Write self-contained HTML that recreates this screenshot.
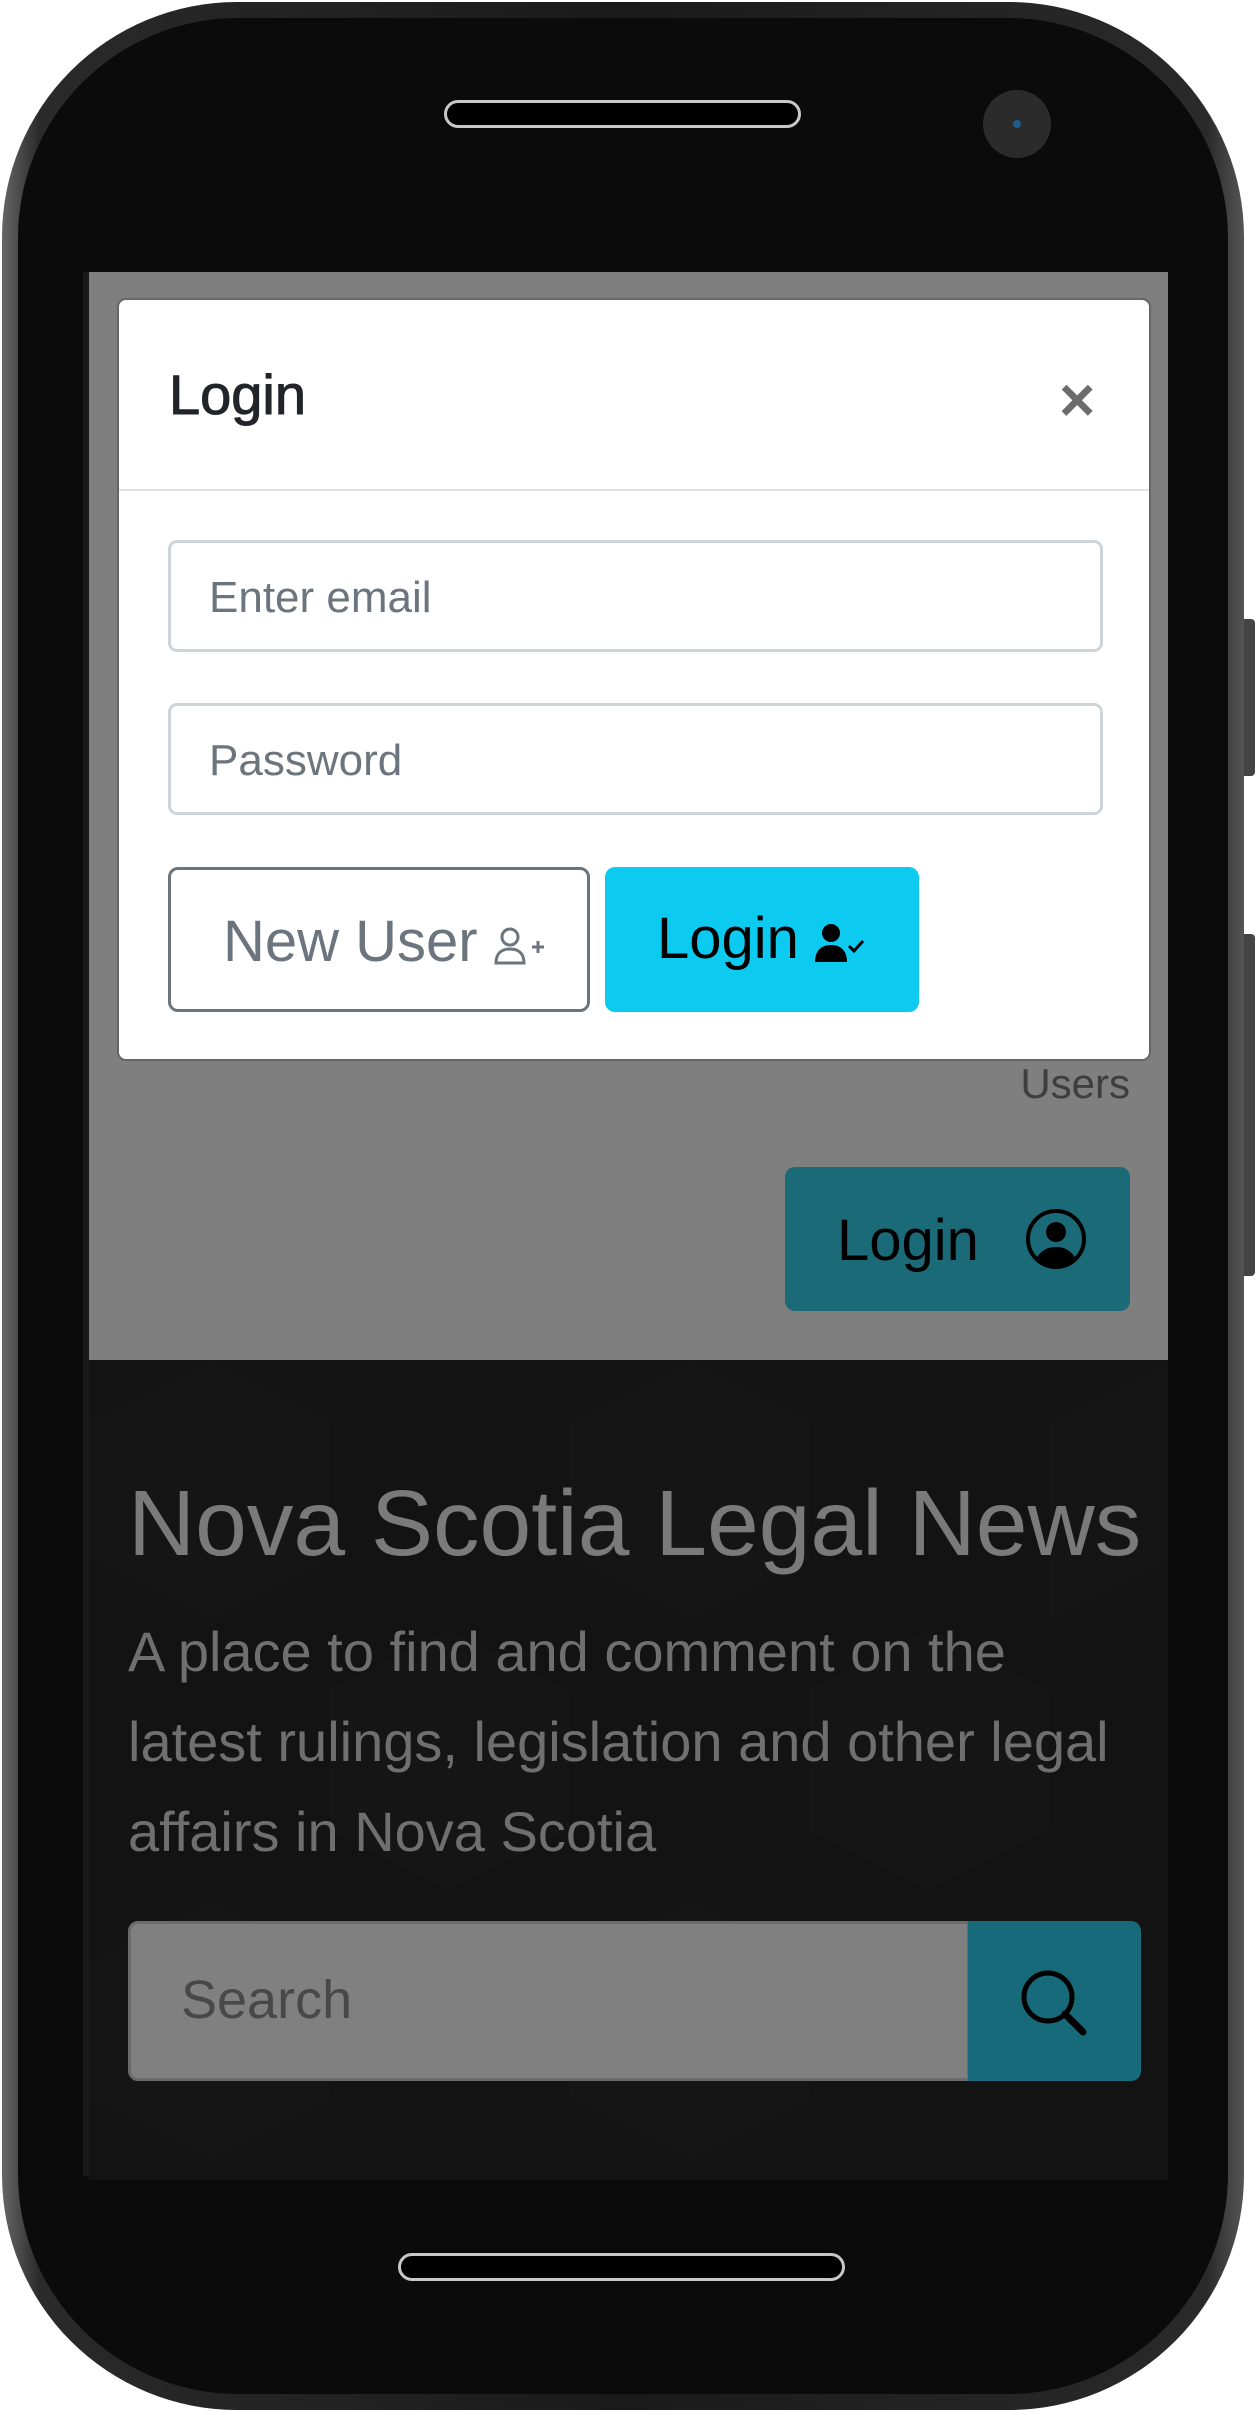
<!DOCTYPE html>
<html><head><meta charset="utf-8">
<style>
*{box-sizing:border-box;margin:0;padding:0}
html,body{width:1260px;height:2415px;background:#fff;overflow:hidden;font-family:"Liberation Sans",sans-serif}
.phone{position:absolute;left:2px;top:2px;width:1242px;height:2408px;border-radius:235px;background:linear-gradient(90deg,#666 0%,#2a2a2a 3%,#1a1a1a 50%,#2a2a2a 97%,#555 100%);}
.inner{position:absolute;left:16px;top:16px;right:16px;bottom:16px;border-radius:220px;background:#0b0b0b}
.btnside{position:absolute;left:1243px;width:12px;background:#444;border-radius:0 4px 4px 0}
.speaker{position:absolute;border:3px solid #c8c8c8;background:#000;border-radius:16px}
.cam{position:absolute;left:983px;top:90px;width:68px;height:68px;border-radius:50%;background:#2b2b2b}
.cam:after{content:"";position:absolute;left:30px;top:30px;width:8px;height:8px;border-radius:50%;background:#1c5d8a}
.screen{position:absolute;left:89px;top:272px;width:1079px;height:1908px;overflow:hidden;background:#121212}
.gray{position:absolute;left:0;top:0;width:100%;height:1088px;background:#7f7f7f}
.modal{position:absolute;left:28px;top:26px;width:1034px;height:763px;background:#fff;border-radius:9px;border:2px solid #666}
.mh{height:191px;border-bottom:2px solid #dee2e6;position:relative}
.mh h5{position:absolute;left:50px;top:62px;font-size:56px;font-weight:normal;color:#212529;-webkit-text-stroke:1px #212529}
.close{position:absolute;left:940px;top:70px;font-size:62px;color:#6c6c6c;font-weight:bold;line-height:1}
.inp{position:absolute;left:49px;width:935px;height:112px;border:3px solid #ced4da;border-radius:9px;font-size:44px;color:#6c757d;padding:30px 0 0 38px}
.b1{position:absolute;left:49px;top:567px;width:422px;height:145px;border:3px solid #6c757d;border-radius:10px;font-size:58px;color:#6c757d;padding:38px 0 0 52px}
.b2{position:absolute;left:486px;top:567px;width:314px;height:145px;background:#0dcaf0;border-radius:10px;font-size:58px;color:#000;padding:38px 0 0 52px}
.users{position:absolute;right:38px;top:788px;font-size:42px;color:#3e3e3e}
.lb{position:absolute;left:696px;top:895px;width:345px;height:144px;background:#1b6a78;border-radius:10px;font-size:58px;color:#000;padding:40px 0 0 52px}
.hero{position:absolute;left:0;top:1088px;width:100%;height:820px;background:#131313}
.title{position:absolute;left:39px;top:1198px;font-size:93px;color:#7a7a7a;white-space:nowrap}
.p{position:absolute;left:39px;top:1335px;font-size:56px;line-height:90px;color:#6f6f6f;white-space:nowrap}
.search{position:absolute;left:39px;top:1649px;width:842px;height:160px;background:#808080;border:3px solid #6a6a6a;border-radius:10px 0 0 10px;font-size:54px;color:#484848;padding:45px 0 0 50px}
.sb{position:absolute;left:879px;top:1649px;width:173px;height:160px;background:#166a79;border-radius:0 10px 10px 0}
</style></head><body>
<div class="btnside" style="top:619px;height:157px"></div>
<div class="btnside" style="top:934px;height:342px"></div>
<div class="phone"><div class="inner"></div></div>
<div class="speaker" style="left:444px;top:100px;width:357px;height:28px"></div>
<div class="cam"></div>
<div class="speaker" style="left:398px;top:2253px;width:447px;height:28px"></div>
<div style="position:absolute;left:83px;top:272px;width:6px;height:1904px;background:#1a1a1a"></div>
<div class="screen">
 <div class="gray"></div>
 <div class="hero">
  <svg width="1079" height="820" style="position:absolute;left:0;top:0" opacity="0.35">
   <g fill="#1a1a1a">
    <polygon points="0,60 120,0 240,60 240,200 120,260 0,200"/>
    <polygon points="480,60 600,0 720,60 720,200 600,260 480,200"/>
    <polygon points="960,60 1080,0 1080,200 960,260"/>
    <polygon points="240,330 360,270 480,330 480,470 360,530 240,470"/>
    <polygon points="720,330 840,270 960,330 960,470 840,530 720,470"/>
    <polygon points="0,600 120,540 240,600 240,740 120,800 0,740"/>
    <polygon points="480,600 600,540 720,600 720,740 600,800 480,740"/>
   </g>
  </svg>
 </div>
 <div class="modal">
  <div class="mh"><h5>Login</h5><div class="close">×</div></div>
  <div class="inp" style="top:240px">Enter email</div>
  <div class="inp" style="top:403px">Password</div>
  <div class="b1">New User <svg width="50" height="40" viewBox="0 0 50 40" style="vertical-align:-4px"><circle cx="16" cy="12" r="8" fill="none" stroke="#6c757d" stroke-width="3"/><path d="M2 38c0-10 6-14 14-14s14 4 14 14z" fill="none" stroke="#6c757d" stroke-width="3"/><path d="M38 22h12M44 16v12" stroke="#6c757d" stroke-width="3"/></svg></div>
  <div class="b2">Login <svg width="50" height="40" viewBox="0 0 50 40" style="vertical-align:-4px"><circle cx="16" cy="11" r="9" fill="#000"/><path d="M0 40c0-12 7-17 16-17s16 5 16 17z" fill="#000"/><path d="M34 24l5 5 9-10" fill="none" stroke="#000" stroke-width="3"/></svg></div>
 </div>
 <div class="users">Users</div>
 <div class="lb">Login <svg width="62" height="62" viewBox="0 0 62 62" style="vertical-align:-10px;margin-left:30px"><circle cx="31" cy="31" r="28" fill="none" stroke="#000" stroke-width="4"/><circle cx="31" cy="24" r="10" fill="#000"/><path d="M11 51c5-9 12-12 20-12s15 3 20 12c-5 6-12 9-20 9s-15-3-20-9z" fill="#000"/></svg></div>
 <div class="title">Nova Scotia Legal News</div>
 <div class="p">A place to find and comment on the<br>latest rulings, legislation and other legal<br>affairs in Nova Scotia</div>
 <div class="search">Search</div>
 <div class="sb"><svg width="173" height="160" viewBox="0 0 173 160"><circle cx="80" cy="76" r="24" fill="none" stroke="#000" stroke-width="5"/><path d="M97 93l18 18" stroke="#000" stroke-width="7" stroke-linecap="round"/></svg></div>
</div>
</body></html>
